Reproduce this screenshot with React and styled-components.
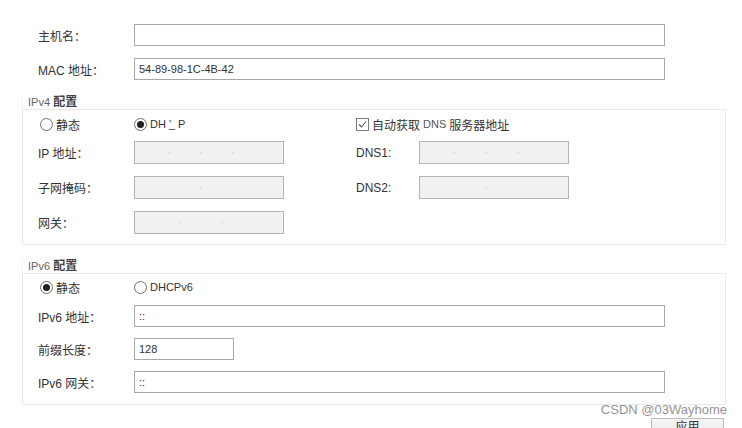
import React from "react";
import styled, { createGlobalStyle } from "styled-components";

const GlobalStyle = createGlobalStyle`
  html, body {
    margin: 0;
    padding: 0;
    background: #ffffff;
  }
  body {
    font-family: "Liberation Sans", "Noto Sans CJK SC", sans-serif;
    color: #333;
  }
`;

const Page = styled.div`
  position: relative;
  width: 742px;
  height: 428px;
  overflow: hidden;
  padding: 24px 0 0 22px;
  box-sizing: border-box;
`;

const TopRows = styled.div`
  display: flex;
  flex-direction: column;
  gap: 12px;
  padding-left: 16px;
`;

const Row = styled.div`
  display: flex;
  align-items: center;
  height: 22px;
`;

const Label = styled.span`
  display: inline-block;
  width: ${(p) => p.w || 96}px;
  font-family: "Liberation Sans", "Noto Sans CJK SC", sans-serif;
  font-size: 12px;
  color: #333;
  white-space: nowrap;
`;

const Input = styled.div`
  box-sizing: border-box;
  width: ${(p) => p.w}px;
  height: ${(p) => p.h || 22}px;
  border: 1px solid ${(p) => (p.disabled ? "#b4b4b4" : "#a8a8a8")};
  background: ${(p) => (p.disabled ? "#f1f1f1" : "#ffffff")};
  font-family: "Liberation Sans", "Noto Sans CJK SC", sans-serif;
  font-size: 11px;
  color: #333;
  padding-left: 4px;
  display: flex;
  align-items: center;
`;

const Dots = styled.div`
  width: 100%;
  display: flex;
  justify-content: space-evenly;
  padding-right: 20px;
  color: #c8c8c8;
  font-size: 10px;
`;

const Legend = styled.div`
  margin-top: ${(p) => p.mt}px;
  height: 14px;
  line-height: 14px;
  padding-left: 5px;
  width: 60px;
  border-left: 1px solid #f2f2f2;
  font-size: 12px;
  color: #555;
  font-family: "Liberation Sans", "Noto Sans CJK SC", sans-serif;
  b {
    font-weight: 700;
    color: #444;
  }
  small {
    font-size: 11px;
    color: #666;
  }
`;

const GroupBox = styled.div`
  box-sizing: border-box;
  width: 704px;
  border: 1px solid #e9e9e9;
  padding: ${(p) => p.pt}px 0 ${(p) => p.pb}px 15px;
  display: flex;
  flex-direction: column;
`;

const ChoiceRow = styled.div`
  display: grid;
  grid-template-columns: ${(p) => p.cols};
  height: 16px;
  align-items: center;
  margin-bottom: ${(p) => p.mb}px;
`;

const Fields = styled.div`
  display: grid;
  grid-template-columns: ${(p) => p.cols};
  grid-auto-rows: ${(p) => p.rowH}px;
  row-gap: ${(p) => p.gap}px;
  align-items: center;
`;

const Choice = styled.label`
  display: flex;
  align-items: center;
  gap: 3px;
  height: 16px;
  margin-left: ${(p) => p.ml || 0}px;
  grid-column: ${(p) => p.col || "auto"};
  font-size: ${(p) => p.fs || 12}px;
  color: #333;
  white-space: nowrap;
  font-family: "Liberation Sans", "Noto Sans CJK SC", sans-serif;
`;

const Radio = styled.span`
  box-sizing: border-box;
  width: 13px;
  height: 13px;
  border-radius: 50%;
  border: 1px solid #6e6e6e;
  background: #fff;
  display: inline-flex;
  align-items: center;
  justify-content: center;
  &::after {
    content: "";
    width: 7px;
    height: 7px;
    border-radius: 50%;
    background: ${(p) => (p.checked ? "#222" : "transparent")};
  }
`;

const Check = styled.span`
  box-sizing: border-box;
  width: 13px;
  height: 13px;
  border: 1px solid #7a7a7a;
  background: #fff;
  display: inline-flex;
  align-items: center;
  justify-content: center;
`;

const Glitch = styled.span`
  letter-spacing: -2px;
  margin-right: 2px;
`;

const Small = styled.span`
  font-size: 11px;
  color: #555;
`;

const Footer = styled.div`
  display: flex;
  justify-content: flex-end;
  width: 704px;
  padding-right: 2px;
  box-sizing: border-box;
  margin-top: 13px;
`;

const Button = styled.div`
  box-sizing: border-box;
  width: 73px;
  height: 22px;
  border: 1px solid #bdbdbd;
  background: linear-gradient(#f6f6f6, #e6e6e6);
  font-size: 12px;
  color: #333;
  text-align: center;
  line-height: 14px;
  font-family: "Noto Sans CJK SC", sans-serif;
`;

const Watermark = styled.div`
  position: absolute;
  top: 402px;
  right: 15px;
  font-family: "Liberation Sans", Arial, sans-serif;
  font-size: 13px;
  color: #959595;
  text-shadow: 0 0 2px #fff;
`;

const IpDots = ({ n = 3 }) => (
  <Dots>
    {Array.from({ length: n }).map((_, i) => (
      <span key={i}>·</span>
    ))}
  </Dots>
);

const V4_COLS = "96px 150px 72px 63px 150px";
const V6_COLS = "96px 531px";

export default function App() {
  return (
    <Page>
      <GlobalStyle />
      <TopRows>
        <Row>
          <Label>主机名：</Label>
          <Input w={531} />
        </Row>
        <Row>
          <Label>MAC 地址：</Label>
          <Input w={531}>54-89-98-1C-4B-42</Input>
        </Row>
      </TopRows>

      <Legend mt={15}>
        <small>IPv4</small> <b>配置</b>
      </Legend>
      <GroupBox pt={6} pb={10}>
        <ChoiceRow cols={V4_COLS} mb={9}>
          <Choice col="1" ml={2}>
            <Radio />
            静态
          </Choice>
          <Choice col="2" fs={11}>
            <Radio checked />
            DH<Glitch>'_</Glitch>P
          </Choice>
          <Choice col="4 / span 2">
            <Check>
              <svg width="9" height="9" viewBox="0 0 9 9">
                <path d="M1 4.5 L3.5 7 L8 1.5" fill="none" stroke="#555" strokeWidth="1.1" />
              </svg>
            </Check>
            自动获取 <Small>DNS</Small> 服务器地址
          </Choice>
        </ChoiceRow>

        <Fields cols={V4_COLS} rowH={23} gap={12}>
          <Label>IP 地址：</Label>
          <Input w={150} h={23} disabled>
            <IpDots />
          </Input>
          <span />
          <Label w={63}>DNS1:</Label>
          <Input w={150} h={23} disabled>
            <IpDots />
          </Input>

          <Label>子网掩码：</Label>
          <Input w={150} h={23} disabled>
            <IpDots n={1} />
          </Input>
          <span />
          <Label w={63}>DNS2:</Label>
          <Input w={150} h={23} disabled>
            <IpDots n={1} />
          </Input>

          <Label>网关：</Label>
          <Input w={150} h={23} disabled>
            <IpDots n={2} />
          </Input>
        </Fields>
      </GroupBox>

      <Legend mt={14}>
        <small>IPv6</small> <b>配置</b>
      </Legend>
      <GroupBox pt={5} pb={11}>
        <ChoiceRow cols={V6_COLS} mb={10}>
          <Choice col="1" ml={2}>
            <Radio checked />
            静态
          </Choice>
          <Choice col="2" fs={11}>
            <Radio />
            DHCPv6
          </Choice>
        </ChoiceRow>

        <Fields cols={V6_COLS} rowH={22} gap={11}>
          <Label>IPv6 地址：</Label>
          <Input w={531}>::</Input>

          <Label>前缀长度：</Label>
          <Input w={100}>128</Input>

          <Label>IPv6 网关：</Label>
          <Input w={531}>::</Input>
        </Fields>
      </GroupBox>

      <Footer>
        <Button>应用</Button>
      </Footer>

      <Watermark>CSDN @03Wayhome</Watermark>
    </Page>
  );
}
